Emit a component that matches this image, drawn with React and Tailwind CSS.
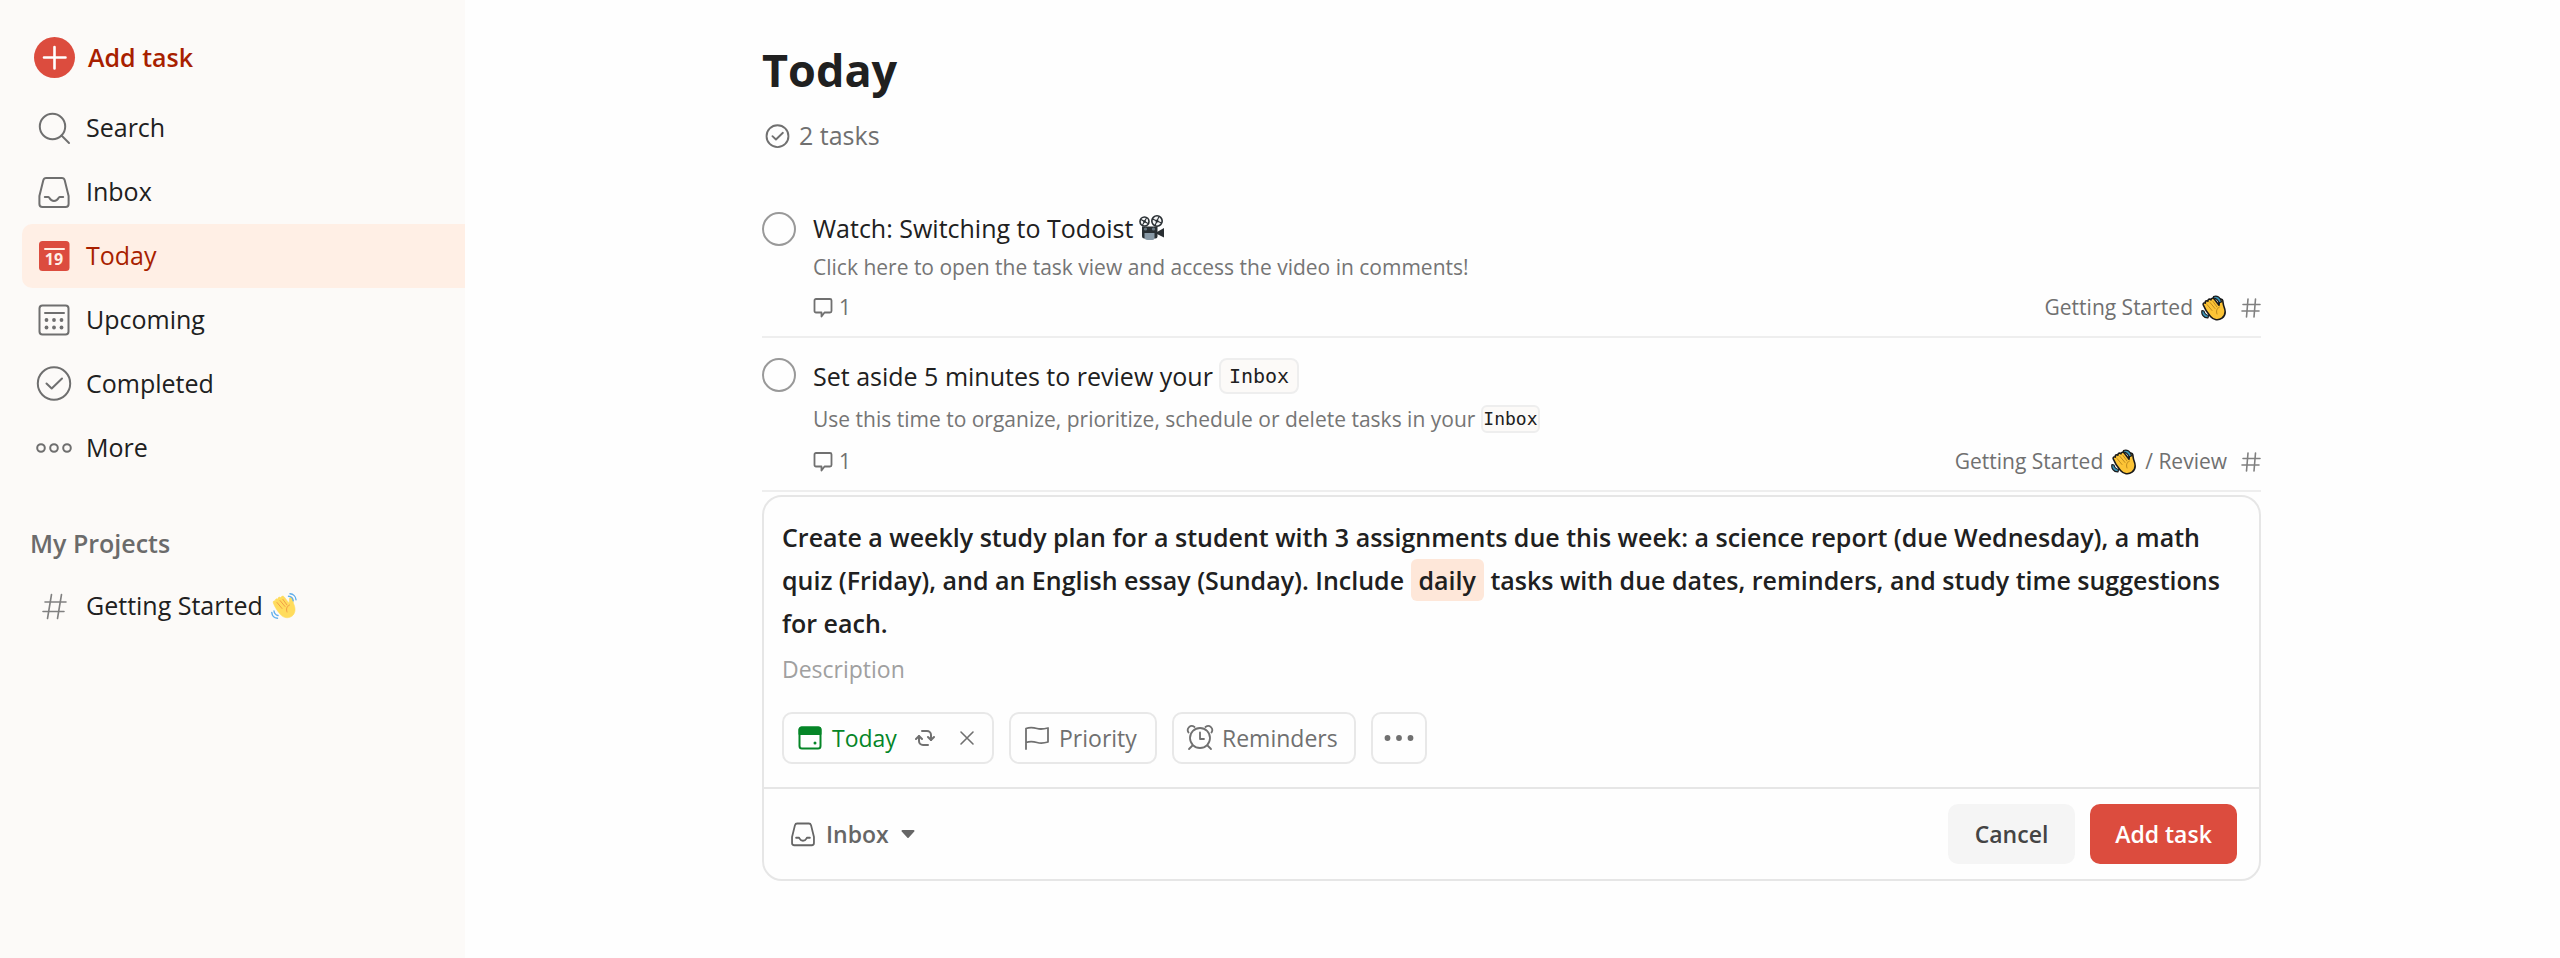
import React from "react";
import { clsx } from "clsx";

function Icon({ size = 40, box = 40, stroke = 2, className, children }) {
  return (
    <svg
      width={size}
      height={size}
      viewBox={`0 0 ${box} ${box}`}
      fill="none"
      stroke="currentColor"
      strokeWidth={stroke}
      strokeLinecap="round"
      strokeLinejoin="round"
      className={clsx("shrink-0", className)}
      aria-hidden="true"
    >
      {children}
    </svg>
  );
}

const SearchIcon = () => (
  <Icon>
    <circle cx="18.5" cy="18.5" r="12.7" />
    <path d="M27.5 27.5 35 35" />
  </Icon>
);

const InboxIcon = (props) => (
  <Icon {...props}>
    <path d="M12.2 6h15.6a3 3 0 0 1 2.9 2.2L34.6 24v8a3 3 0 0 1-3 3H8.4a3 3 0 0 1-3-3v-8L9.3 8.2A3 3 0 0 1 12.2 6z" />
    <path d="M10.8 25h3.7c1.2 0 1 4 5.5 4s4.3-4 5.5-4h3.7" />
  </Icon>
);

const TodayIcon = () => (
  <Icon className="text-[#dc4c3e]">
    <rect x="5" y="5" width="30.5" height="30" rx="3.5" fill="currentColor" stroke="none" />
    <path d="M11 13h19" stroke="#ffefe5" />
    <text
      x="20"
      y="29"
      fill="#ffefe5"
      stroke="none"
      textAnchor="middle"
      className="text-[16px] font-bold"
    >
      19
    </text>
  </Icon>
);

const UpcomingIcon = () => (
  <Icon>
    <rect x="5.5" y="5.5" width="29" height="29" rx="3" />
    <path d="M11 13h19" />
    <g fill="currentColor" stroke="none">
      {[12.5, 20, 27.5].map((x) => (
        <React.Fragment key={x}>
          <circle cx={x} cy="20" r="1.9" />
          <circle cx={x} cy="27.5" r="1.9" />
        </React.Fragment>
      ))}
    </g>
  </Icon>
);

const CompletedIcon = (props) => (
  <Icon {...props}>
    <circle cx="20" cy="19.5" r="16.2" />
    <path d="m12.5 19.5 5.2 5L28 14.5" />
  </Icon>
);

const MoreIcon = () => (
  <Icon>
    <circle cx="7" cy="20" r="3.8" />
    <circle cx="20" cy="20" r="3.8" />
    <circle cx="33" cy="20" r="3.8" />
  </Icon>
);

const HashIcon = () => (
  <Icon stroke={1.6} className="text-[#808080]">
    <path d="M11 16h21M9 25.5h21M17.5 8.5l-4 24M27.5 8.5l-4 24" />
  </Icon>
);

const SmallHashIcon = () => (
  <Icon size={20} box={20} stroke={1.6} className="text-[#808080]">
    <path d="M2 6.5h17M1 13h17M7 1 5.5 19M14.5 1 13 19" />
  </Icon>
);

const CommentIcon = () => (
  <Icon size={20} box={20} stroke={1.8}>
    <path d="M3 1h14a1.5 1.5 0 0 1 1.5 1.5V13a1.5 1.5 0 0 1-1.5 1.5h-5.5l-3 4v-4H3A1.5 1.5 0 0 1 1.5 13V2.5A1.5 1.5 0 0 1 3 1z" />
  </Icon>
);

const CalendarIcon = () => (
  <Icon size={24} box={24}>
    <rect x="1.5" y="1.5" width="21" height="21" rx="2.5" />
    <path d="M1.5 3.5a2 2 0 0 1 2-2h17a2 2 0 0 1 2 2V8h-21z" fill="currentColor" />
    <circle cx="17" cy="17" r="1.5" fill="currentColor" stroke="none" />
  </Icon>
);

const RepeatIcon = () => (
  <Icon size={20} box={20}>
    <path d="M7 3h5a4 4 0 0 1 4 4v5M13 17H8a4 4 0 0 1-4-4V8" />
    <path d="m13 9 3 3 3-3M1 11l3-3 3 3" />
  </Icon>
);

const CloseIcon = () => (
  <Icon size={16} box={16} stroke={1.6}>
    <path d="m2 2 12 12M14 2 2 14" />
  </Icon>
);

const FlagIcon = () => (
  <Icon size={24} box={24} stroke={1.8}>
    <path d="M1 23V2.5c4-1.5 7.5-1 11 0 3.5 1 7 .5 11-.5v14c-4 1.2-7.5 1.5-11 .5-3.500-1-7-1.500-11 0" />
  </Icon>
);

const AlarmIcon = () => (
  <Icon size={28} box={28} stroke={1.8}>
    <circle cx="14" cy="14" r="10" />
    <path d="M14 8.5V15h4M6.5 21.5 3 25M21.5 21.5 25 25" />
    <path d="M2.5 8.5C0 4.5 4.5 0 8.5 3M25.5 8.5c2.5-4-2-8.5-6-5.5" />
  </Icon>
);

function WavingHand({ outlined }) {
  return (
    <svg width="26" height="26" viewBox="0 0 26 26" fill="none" aria-hidden="true" className="shrink-0">
      <path
        d="M2.3 10c-.6-1.8 1-2.7 2.1-1.9-.6-1.9 1.2-3.1 2.5-1.8-.2-2 1.7-2.900 3-1.500.4-1.8 2.3-2.3 3.4-.8l4.700 6.200c.5-1.700 0-3.700.7-5.200.8-1.400 2.600-1 3 .5.5 2 .3 4 1.400 6.500 1.800 4.500.9 8.800-2.100 11.100-3.500 2.700-8.500 2-11.500-1.500C6.500 18 4 14.500 2.300 10z"
        fill={outlined ? "#fcc436" : "#ffdc5d"}
        stroke={outlined ? "#1a1a1a" : "#ffdc5d"}
        strokeWidth={outlined ? 1.6 : 0.6}
        strokeLinejoin="round"
      />
      <path
        d="m6 9.5 5 6M9 7.5l5 6M12 6.5l4 5.5M18.5 12c-3 1.5-3.5 4-2.5 7"
        stroke={outlined ? "#b9851b" : "#ef9645"}
        strokeWidth="0.9"
        strokeLinecap="round"
      />
      {outlined ? (
        <g stroke="#1a1a1a" strokeWidth="1.2" fill="#3a93b5" strokeLinejoin="round">
          <path d="M12.5 1.5c3.5-1.5 7.5 1 8 5.5l-2.5.8c-.7-2.5-2.5-4.3-5.5-4.8z" />
          <path d="M1 15.500c-1 3.500 1.500 7.500 6 7.300l.5-2.300C5 20 3.500 18.500 3 16z" />
        </g>
      ) : (
        <g stroke="#5dadec" strokeWidth="1.4" strokeLinecap="round">
          <path d="M17.5 3.2c2.5 0 4.5 2 4.7 4.5M19 .8c3.3.2 5.8 2.7 6 6" />
          <path d="M3 18c.3 2.3 1.8 4 4 4.5M.8 19.500c.3 3.200 2.500 5.500 5.700 5.700" />
        </g>
      )}
    </svg>
  );
}

function Projector() {
  return (
    <svg width="26" height="26" viewBox="0 0 26 26" aria-hidden="true" className="shrink-0">
      <g fill="#f4f5f6" stroke="#292f33" strokeWidth="1.6">
        <circle cx="5.5" cy="6.5" r="4.5" />
        <circle cx="18" cy="6" r="5.2" />
      </g>
      <path d="m2 4.500 7 4M7.500 3l-4 7M13.500 4l9 4M20 1.500l-4 9" stroke="#292f33" strokeWidth="1.1" />
      <circle cx="5.5" cy="6.5" r="1.3" fill="#292f33" />
      <circle cx="18" cy="6" r="1.5" fill="#292f33" />
      <path d="M3 11.5h15.5v10a2 2 0 0 1-2 2h-11A2.5 2.5 0 0 1 3 21z" fill="#292f33" />
      <path d="m18 17 7-4v9.5L18 19z" fill="#292f33" />
      <path d="M5.5 18h10v5q0 2-2 2h-5q-3 0-3-3z" fill="#8899a6" />
      <circle cx="6.5" cy="14" r="1.6" fill="#66757f" />
      <circle cx="14.5" cy="14" r="1.6" fill="#66757f" />
    </svg>
  );
}

const navItems = [
  { label: "Search", icon: SearchIcon },
  { label: "Inbox", icon: InboxIcon },
  { label: "Today", icon: TodayIcon, active: true },
  { label: "Upcoming", icon: UpcomingIcon },
  { label: "Completed", icon: CompletedIcon },
  { label: "More", icon: MoreIcon },
];

function Sidebar() {
  return (
    <aside className="w-[465px] shrink-0 bg-[#fcfaf8] pt-[26px] pl-[22px] text-[25px]">
      <button className="mb-[6px] flex h-16 w-full items-center gap-3 pl-3 font-semibold text-[#a81f00]">
        <svg width="42" height="42" viewBox="0 0 42 42" className="shrink-0" aria-hidden="true">
          <circle cx="20.5" cy="20.5" r="20.5" fill="#dc4c3e" />
          <path d="M20.5 10v21.5M10 20.5h21.5" stroke="#fff" strokeWidth="2.6" strokeLinecap="round" />
        </svg>
        Add task
      </button>

      <nav>
        {navItems.map(({ label, icon: NavIcon, active }) => (
          <a
            key={label}
            href="#"
            className={clsx(
              "flex h-16 items-center gap-3 rounded-l-[10px] pl-3",
              active ? "bg-[#ffefe5] text-[#a81f00]" : "text-[#202020]"
            )}
          >
            <span className={active ? "" : "text-[#6f6f6f]"}>
              <NavIcon />
            </span>
            {label}
          </a>
        ))}
      </nav>

      <h2 className="mt-[34px] flex h-[60px] items-center pl-2 font-semibold text-[#6b6b6b]">My Projects</h2>
      <a href="#" className="flex h-16 items-center gap-3 pl-3 text-[#202020]">
        <HashIcon />
        <span className="flex items-center gap-2">
          Getting Started <WavingHand />
        </span>
      </a>
    </aside>
  );
}

function Task({ id, title, description, comments, section }) {
  return (
    <li className="flex gap-[17px] border-b-2 border-[#eeeeee] pb-[10px]">
      <input
        id={id}
        type="checkbox"
        className="mt-1 size-[34px] shrink-0 appearance-none rounded-full border-2 border-[#999] checked:bg-[#999]"
      />
      <div className="min-w-0 flex-1">
        <label htmlFor={id} className="flex min-h-10 items-center text-[25px] leading-10 text-[#202020]">
          {title}
        </label>
        <p className="flex min-h-[38px] items-center text-[21px] leading-9 text-[#757575]">{description}</p>
        <div className="mt-1 flex h-9 items-center justify-between text-[21px] text-[#707070]">
          <span className="flex items-center gap-[6px]">
            <CommentIcon /> {comments}
          </span>
          <a href="#" className="flex items-center gap-2">
            Getting Started <WavingHand outlined /> {section}
            <span className="ml-[6px]">
              <SmallHashIcon />
            </span>
          </a>
        </div>
      </div>
    </li>
  );
}

function Chip({ children, className, ...rest }) {
  return (
    <button
      type="button"
      className={clsx(
        "flex h-[52px] items-center rounded-[10px] border-2 border-[#e8e8e8] text-[23px] text-[#707070]",
        className
      )}
      {...rest}
    >
      {children}
    </button>
  );
}

function TaskForm() {
  return (
    <form className="mt-[3px] rounded-[20px] border-2 border-[#e6e6e6]" onSubmit={(e) => e.preventDefault()}>
      <div className="px-[18px] pt-[19px] pb-[23px]">
        <div
          role="textbox"
          aria-label="Task name"
          contentEditable
          suppressContentEditableWarning
          className="pr-4 text-[25px] leading-[43px] font-semibold text-[#202020] outline-none"
        >
          Create a weekly study plan for a student with 3 assignments due this week: a science report (due
          Wednesday), a math quiz (Friday), and an English essay (Sunday). Include{" "}
          <mark className="rounded-md bg-[#fee7d9] px-2 py-1 text-[#202020]">daily</mark> tasks with due
          dates, reminders, and study time suggestions for each.
        </div>
        <input
          type="text"
          aria-label="Description"
          placeholder="Description"
          className="mt-1 block h-10 w-full text-[23px] outline-none placeholder:text-[#a0a0a0]"
        />

        <div className="mt-[23px] flex gap-[15px]">
          <div className="flex h-[52px] w-[212px] items-center rounded-[10px] border-2 border-[#e8e8e8] pl-[14px] text-[23px] text-[#058527]">
            <button type="button" className="flex items-center gap-[10px]">
              <CalendarIcon /> Today
            </button>
            <span className="ml-[18px] text-[#707070]">
              <RepeatIcon />
            </span>
            <button type="button" aria-label="Remove date" className="ml-6 text-[#707070]">
              <CloseIcon />
            </button>
          </div>
          <Chip className="w-[148px] gap-[10px] pl-[14px]">
            <FlagIcon /> Priority
          </Chip>
          <Chip className="w-[184px] gap-2 pl-3">
            <AlarmIcon /> Reminders
          </Chip>
          <Chip className="w-14 justify-center" aria-label="More actions">
            <svg width="30" height="6" viewBox="0 0 30 6" fill="currentColor" aria-hidden="true">
              <circle cx="3.5" cy="3" r="2.9" />
              <circle cx="15" cy="3" r="2.9" />
              <circle cx="26.5" cy="3" r="2.9" />
            </svg>
          </Chip>
        </div>
      </div>

      <div className="flex items-center justify-between border-t-2 border-[#e6e6e6] py-[15px] pr-[22px] pl-6 text-[23px] font-semibold">
        <div className="flex items-center text-[#666]">
          <InboxIcon size={30} stroke={2.4} />
          <select aria-label="Project" defaultValue="Inbox" className="ml-2 appearance-none bg-transparent outline-none">
            <option>Inbox</option>
          </select>
          <svg width="14" height="8" viewBox="0 0 14 8" className="ml-3" fill="currentColor" aria-hidden="true">
            <path d="M1.5 0h11a1 1 0 0 1 .8 1.6l-5.500 6a1 1 0 0 1-1.600 0l-5.500-6A1 1 0 0 1 1.500 0z" />
          </svg>
        </div>
        <div className="flex gap-[15px]">
          <button type="button" className="h-[60px] w-[127px] rounded-[10px] bg-[#f5f5f5] text-[#444]">
            Cancel
          </button>
          <button type="submit" className="h-[60px] w-[147px] rounded-[10px] bg-[#dc4c3e] text-white">
            Add task
          </button>
        </div>
      </div>
    </form>
  );
}

export default function App() {
  return (
    <div className="flex min-h-screen bg-[#fefefe] font-['Open_Sans','Noto_Sans',sans-serif]">
      <Sidebar />
      <main className="min-w-0 flex-1 pr-[2px]">
        <div className="mx-auto max-w-[1499px] pt-[38px]">
          <h1 className="text-[45px] leading-[64px] font-bold text-[#202020]">Today</h1>
          <p className="mt-[14px] flex h-10 items-center gap-2 pl-[2px] text-[25px] text-[#707070]">
            <CompletedIcon size={27} stroke={2.8} />2 tasks
          </p>

          <ul className="mt-[52px]">
            <Task
              id="task-watch"
              title={
                <>
                  Watch: Switching to Todoist <span className="ml-[6px]"><Projector /></span>
                </>
              }
              description="Click here to open the task view and access the video in comments!"
              comments={1}
            />
            <li className="h-4" aria-hidden="true" />
            <Task
              id="task-review"
              title={
                <>
                  Set aside 5 minutes to review your
                  <code className="my-1 ml-[6px] rounded-lg border-2 border-[#eeeeee] bg-[#fcfaf8] px-2 font-['DejaVu_Sans_Mono',monospace] text-[20px] leading-8">
                    Inbox
                  </code>
                </>
              }
              description={
                <>
                  Use this time to organize, prioritize, schedule or delete tasks in your
                  <code className="my-[7px] ml-[6px] rounded-md border-2 border-[#eeeeee] bg-[#fcfaf8] font-['DejaVu_Sans_Mono',monospace] text-[18px] leading-6 text-[#202020]">
                    Inbox
                  </code>
                </>
              }
              comments={1}
              section="/ Review"
            />
          </ul>

          <TaskForm />
        </div>
      </main>
    </div>
  );
}
